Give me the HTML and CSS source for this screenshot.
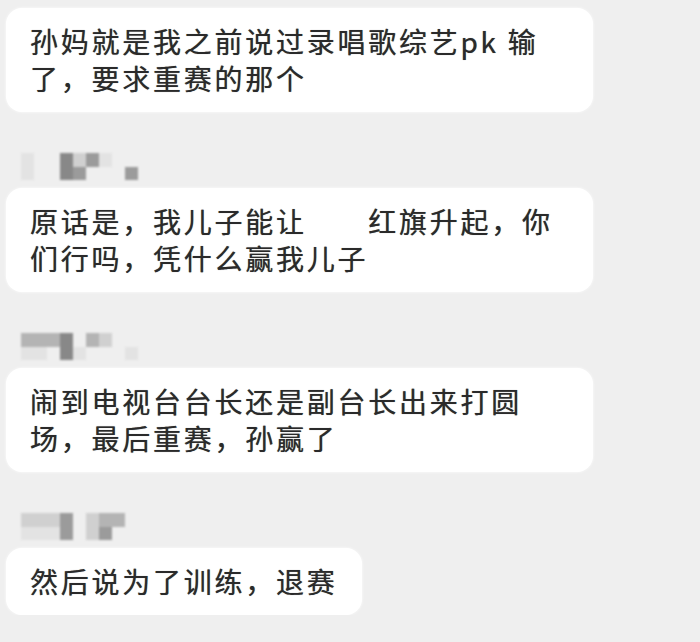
FILE: index.html
```html
<!DOCTYPE html>
<html lang="zh-CN">
<head>
    <meta charset="UTF-8">
    <meta name="viewport" content="width=device-width, initial-scale=1.0">
    <title>聊天记录</title>
    <link rel="stylesheet" href="styles.css">
</head>
<body>
    <div class="chat">
        <div class="msg">
            <div class="bubble">孙妈就是我之前说过录唱歌综艺pk 输了，要求重赛的那个</div>
        </div>

        <div class="msg">
            <!-- 打码的昵称 -->
            <div class="name">
                <span class="s1"></span><span></span><span></span><span class="s5"></span><span class="s2"></span><span class="s4"></span><span class="s1"></span><span></span><span></span>
                <span class="s1"></span><span></span><span></span><span class="s5"></span><span class="s4"></span><span></span><span></span><span></span><span class="s4"></span>
            </div>
            <div class="bubble">原话是，我儿子能让&#12288;&#12288;红旗升起，你们行吗，凭什么赢我儿子</div>
        </div>

        <div class="msg">
            <div class="name">
                <span class="s3"></span><span class="s3"></span><span class="s3"></span><span class="s5"></span><span></span><span class="s3"></span><span class="s2"></span><span></span><span></span>
                <span class="s1"></span><span class="s1"></span><span></span><span class="s5"></span><span class="s1"></span><span></span><span></span><span></span><span class="s1"></span>
            </div>
            <div class="bubble">闹到电视台台长还是副台长出来打圆场，最后重赛，孙赢了</div>
        </div>

        <div class="msg">
            <div class="name">
                <span class="s2"></span><span class="s2"></span><span class="s2"></span><span class="s4"></span><span></span><span class="s2"></span><span class="s3"></span><span class="s3"></span><span></span>
                <span class="s1"></span><span class="s1"></span><span class="s1"></span><span class="s4"></span><span></span><span class="s2"></span><span class="s4"></span><span></span><span></span>
            </div>
            <div class="bubble">然后说为了训练，退赛</div>
        </div>
    </div>
</body>
</html>
```

FILE: styles.css
```css
/* 全局样式 */
* {
    box-sizing: border-box;
    margin: 0;
    padding: 0;
}

body {
    background: #efefef;
    font-family: "Noto Sans CJK SC", "Noto Sans", sans-serif;
    color: #2a2a2a;
    overflow: hidden;
}

/* 聊天列表 */
.chat {
    display: flex;
    flex-direction: column;
    gap: 41px;
    padding: 8px 0 0 6px;
}

.msg {
    display: flex;
    flex-direction: column;
    align-items: flex-start;
    gap: 8px;
}

/* 气泡 */
.bubble {
    width: fit-content;
    max-width: 587px;
    padding: 15px 24px;
    background: #fff;
    border-radius: 16px;
    font-size: 28px;
    line-height: 37px;
    letter-spacing: 2.75px;
    text-shadow: 0 0 0.7px rgba(0, 0, 0, 0.6); /* 截图略糊，加粗一点 */
    box-shadow: 0 0 3px rgba(255, 255, 255, 0.9);
}

/* 马赛克昵称 */
.name {
    display: grid;
    grid-template-columns: repeat(9, 13px);
    grid-template-rows: repeat(2, 13.5px);
    margin-left: 15px;
    filter: blur(0.8px);
}

.s1 { background: #e3e3e3; }
.s2 { background: #d0d0d0; }
.s3 { background: #b4b4b4; }
.s4 { background: #9b9b9b; }
.s5 { background: #888; }
```
